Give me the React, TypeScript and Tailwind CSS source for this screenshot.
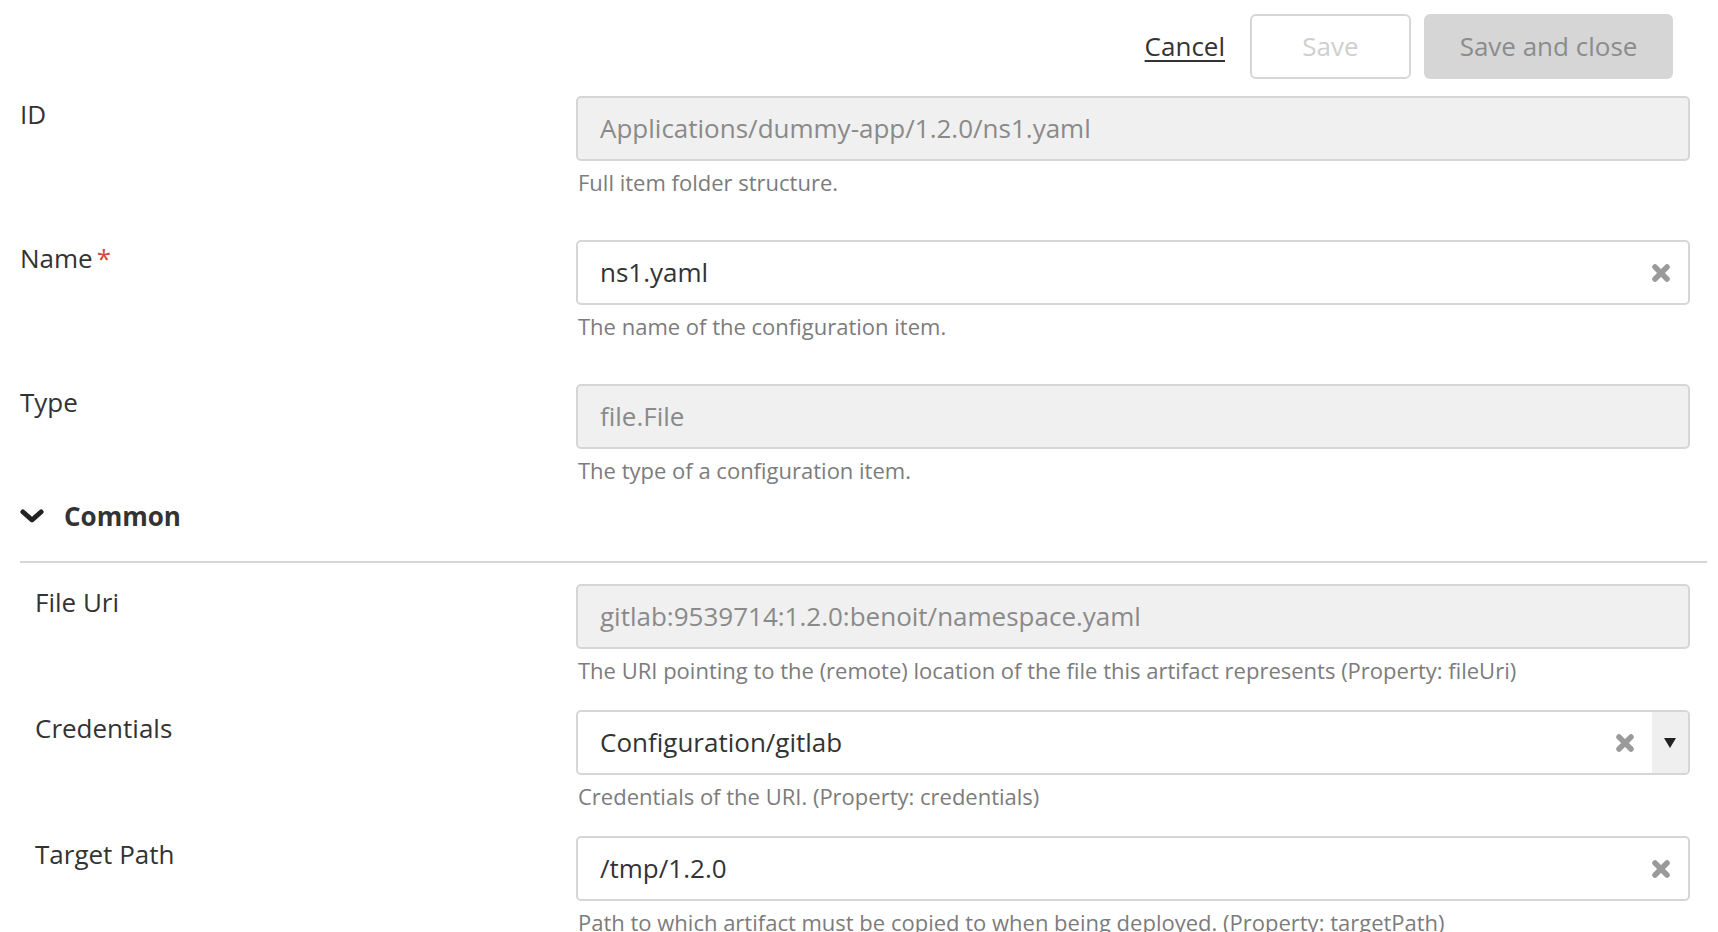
function ClearIcon() {
  return (
    <svg width="22" height="22" viewBox="0 0 22 22" className="shrink-0">
      <path d="M5 5 L17 17 M17 5 L5 17" stroke="#9a9a9a" strokeWidth="5.5" strokeLinecap="round" />
    </svg>
  );
}

function Field({
  label,
  value,
  help,
  disabled = false,
  required = false,
  clearable = false,
  select = false,
  indent = false,
}: {
  label: string;
  value: string;
  help: string;
  disabled?: boolean;
  required?: boolean;
  clearable?: boolean;
  select?: boolean;
  indent?: boolean;
}) {
  return (
    <div className="flex">
      <div
        className={`${indent ? "w-[556px] pl-[15px]" : "w-[556px]"} shrink-0 text-[26px] leading-[36px] text-[#333]`}
      >
        {label}
        {required && <span className="ml-1 text-[#d0463a]">*</span>}
      </div>
      <div className="flex-1">
        <div
          className={`flex h-[65px] items-center rounded-[5px] border-2 border-[#d6d6d6] ${
            disabled ? "bg-[#f0f0f0] text-[#8a8a8a]" : "bg-white text-[#333]"
          }`}
        >
          <span className="flex-1 truncate pl-[22px] text-[26px]">{value}</span>
          {clearable && !select && (
            <span className="pr-[16px]">
              <ClearIcon />
            </span>
          )}
          {select && (
            <>
              <span className="pr-[16px]">
                <ClearIcon />
              </span>
              <span className="flex h-full w-[36px] items-center justify-center rounded-r-[3px] bg-[#efefef]">
                <svg width="14" height="12" viewBox="0 0 14 12">
                  <path d="M1 1 L13 1 L7 11 Z" fill="#222" />
                </svg>
              </span>
            </>
          )}
        </div>
        <div className="mt-[6px] pl-[2px] text-[22px] leading-[30px] text-[#7c7c7c]">{help}</div>
      </div>
    </div>
  );
}

export default function App() {
  return (
    <div
      className="h-[932px] w-[1718px] overflow-hidden bg-white pl-[20px] pr-[28px]"
      style={{ fontFamily: '"Open Sans", "Liberation Sans", sans-serif' }}
    >
      <div className="flex items-center justify-end pt-[14px] pr-[17px]">
        <a href="#" className="mr-[25px] text-[26px] text-[#333] underline underline-offset-4">
          Cancel
        </a>
        <button className="mr-[13px] h-[65px] w-[161px] rounded-[6px] border-2 border-[#d6d6d6] bg-white text-[26px] text-[#cfcfcf]">
          Save
        </button>
        <button className="h-[65px] w-[249px] rounded-[6px] bg-[#d6d6d6] text-[26px] text-[#8c8c8c]">
          Save and close
        </button>
      </div>

      <div className="mt-[17px] flex flex-col gap-[43px]">
        <Field
          label="ID"
          value="Applications/dummy-app/1.2.0/ns1.yaml"
          help="Full item folder structure."
          disabled
        />
        <Field label="Name" value="ns1.yaml" help="The name of the configuration item." required clearable />
        <Field label="Type" value="file.File" help="The type of a configuration item." disabled />
      </div>

      <div className="mt-[13px] flex items-center gap-[20px] text-[26px] leading-[36px] font-bold text-[#333]">
        <svg width="24" height="18" viewBox="0 0 24 18">
          <path d="M3 5 L12 13 L21 5" stroke="#222" strokeWidth="5" fill="none" strokeLinecap="round" strokeLinejoin="round" />
        </svg>
        Common
      </div>

      <div className="mt-[27px] mr-[-17px] border-t-2 border-[#d6d6d6]" />

      <div className="mt-[21px] flex flex-col gap-[25px]">
        <Field
          indent
          label="File Uri"
          value="gitlab:9539714:1.2.0:benoit/namespace.yaml"
          help="The URI pointing to the (remote) location of the file this artifact represents (Property: fileUri)"
          disabled
        />
        <Field
          indent
          label="Credentials"
          value="Configuration/gitlab"
          help="Credentials of the URI. (Property: credentials)"
          select
        />
        <Field
          indent
          label="Target Path"
          value="/tmp/1.2.0"
          help="Path to which artifact must be copied to when being deployed. (Property: targetPath)"
          clearable
        />
      </div>
    </div>
  );
}
